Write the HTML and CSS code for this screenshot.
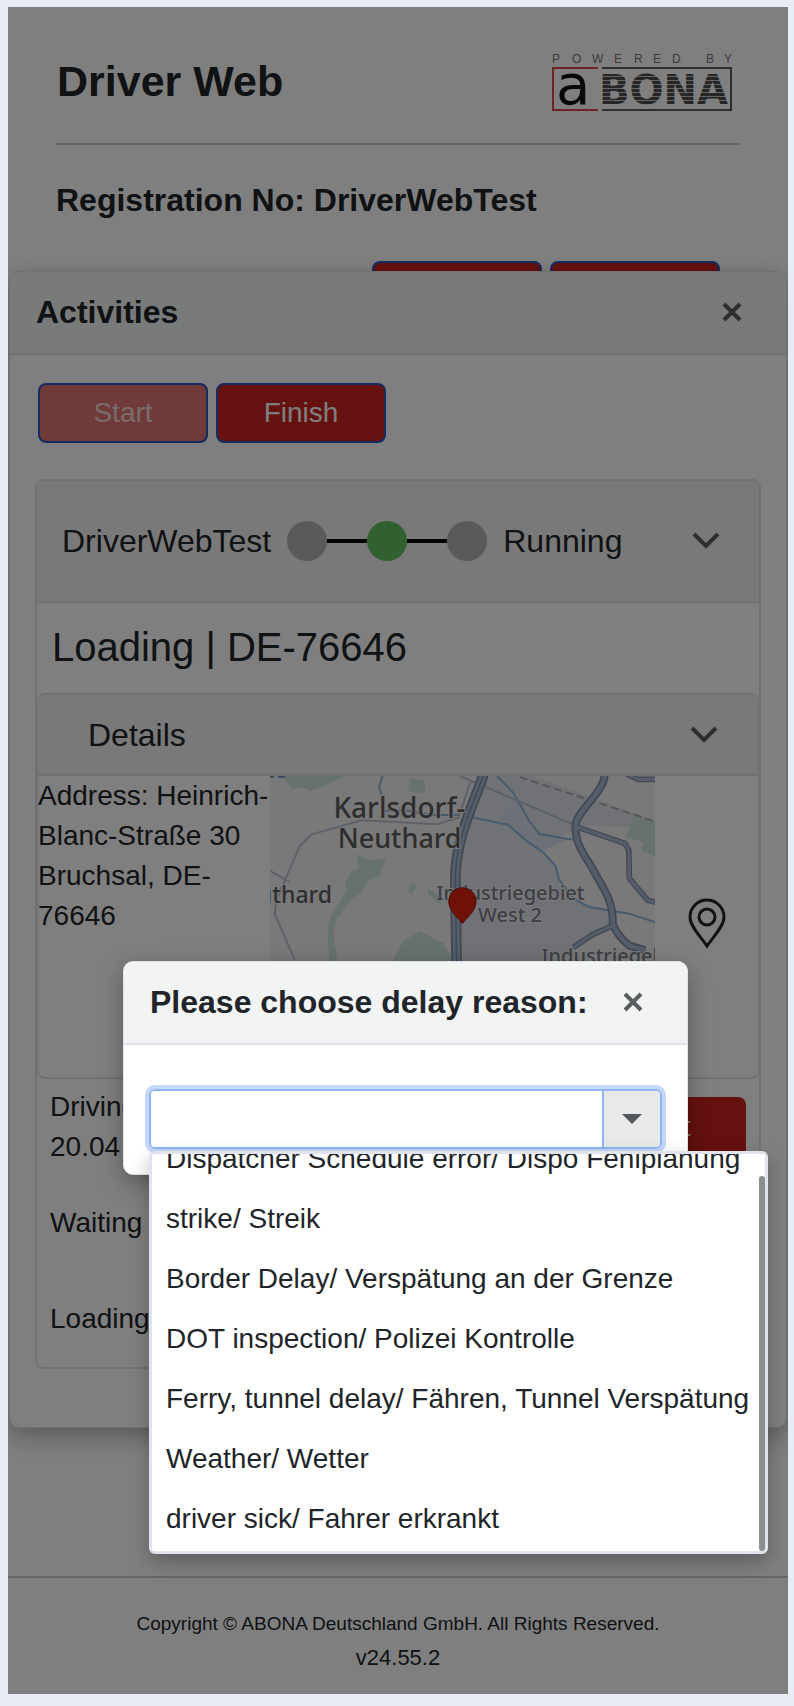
FILE: index.html
```html
<!DOCTYPE html>
<html lang="en">
<head>
<meta charset="utf-8">
<meta name="viewport" content="width=device-width, initial-scale=1">
<title>Driver Web</title>
<link rel="stylesheet" href="styles.css">
</head>
<body>
<div class="page">
  <header class="page-header">
    <h1 class="page-title">Driver Web</h1>
    <svg class="logo" viewBox="0 0 180 58" role="img" aria-label="Powered by ABONA">
      <defs>
        <pattern id="stripes" width="8" height="4" patternUnits="userSpaceOnUse">
          <rect width="8" height="3" fill="#4c4c4c"/>
          <rect y="3" width="8" height="1" fill="#c8c8c8"/>
        </pattern>
      </defs>
      <text class="logo-tag" y="10" x="0 20 40 62 82 101 120 148 154 172">POWERED BY</text>
      <path d="M46 15H1v42h45" fill="none" stroke="#d84848" stroke-width="2"/>
      <path d="M50 15h129v42H50" fill="none" stroke="#5c5c5c" stroke-width="2"/>
      <text class="logo-a" x="4" y="51">a</text>
      <text class="logo-name" x="47" y="51" fill="url(#stripes)">BONA</text>
    </svg>
  </header>
  <main class="page-main">
    <h2 class="registration">Registration No: DriverWebTest</h2>
    <div class="page-actions">
      <button class="btn btn-outlined" type="button" aria-label="Activities"></button>
      <button class="btn btn-outlined" type="button" aria-label="Refresh"></button>
    </div>
  </main>
  <footer class="page-footer">
    <p class="copyright">Copyright © ABONA Deutschland GmbH. All Rights Reserved.</p>
    <p class="version">v24.55.2</p>
  </footer>

  <section class="dialog activities" role="dialog" aria-labelledby="activities-title">
    <div class="dialog-header">
      <h2 class="dialog-title" id="activities-title">Activities</h2>
      <button class="icon-btn" type="button" aria-label="Close">
        <svg class="icon-close" viewBox="0 0 20 20"><path d="M2 2l16 16M18 2L2 18"/></svg>
      </button>
    </div>
    <div class="dialog-body">
      <div class="actions">
        <button class="btn btn-outlined" type="button" disabled>Start</button>
        <button class="btn btn-outlined" type="button">Finish</button>
      </div>
      <div class="card">
        <div class="card-header">
          <span>DriverWebTest</span>
          <span class="steps">
            <span class="dot"></span><span class="bar"></span><span class="dot dot-active"></span><span class="bar"></span><span class="dot"></span>
          </span>
          <span>Running</span>
          <button class="icon-btn push" type="button" aria-label="Toggle activity">
            <svg class="icon-chevron" viewBox="0 0 28 18"><path d="M2 2l12 12L26 2"/></svg>
          </button>
        </div>
        <h3 class="stop-title">Loading | DE-76646</h3>
        <div class="panel">
          <div class="panel-header">
            <span>Details</span>
            <button class="icon-btn push" type="button" aria-label="Toggle details">
              <svg class="icon-chevron" viewBox="0 0 28 18"><path d="M2 2l12 12L26 2"/></svg>
            </button>
          </div>
          <div class="panel-body">
            <p class="address">Address: Heinrich-Blanc-Straße 30 Bruchsal, DE-76646</p>
            <svg class="map" viewBox="30 21 1158 879" preserveAspectRatio="xMidYMin slice" role="img" aria-label="Map">
              <rect x="30" y="21" width="1158" height="879" fill="#f3f3f3"/>
              <g fill="#e2e5eb">
                <path d="M690 21h130l368 134v20L960 170 830 245 600 240 625 150 668 60z"/>
                <path d="M600 240L630 145 740 165 830 240 885 290 900 345 970 405 1050 430 1060 470 940 530 880 620 600 620z"/>
                <path d="M770 80L720 145 760 180 850 245 930 210 830 190z" fill="#dce1ee"/>
              </g>
              <g fill="#d0e5d8">
                <path d="M65 21h190L200 48 155 66 128 55 98 60z"/>
                <path d="M450 27l45 8v40l-50-10z"/>
                <path d="M290 255l40 18 50-6-22 55-30 10-20 35-28 20-50 63c-18 35-2 80 2 125h-24c-2-50-8-90 4-130l48-78-4-22 20-40 22-4z"/>
                <path d="M460 337l10 14-16 27-10-13zM505 357l40 30v22l-42-35z"/>
                <path d="M400 572l30-55 50-30 70 35 32 55v40H400z"/>
                <path d="M1122 142l66 16v106l-45-18 10-26-55-16z"/>
              </g>
              <path d="M30 23h12M55 23h20" stroke="#5f8db8" stroke-width="6"/>
              <g fill="none" stroke="#8fb6dc" stroke-width="6">
                <path d="M368 21l-10 35 8 20M375 125l60-2 80 15h85"/>
                <path d="M635 145l110 22 55 48 50 35 38 42 10 40 45 58 45 24 120 20 80 26"/>
                <path d="M712 21l50 52 45 80 32 42 100 17"/>
              </g>
              <g fill="none" stroke="#bcc2d2" stroke-width="6">
                <path d="M30 305l60 34M105 572L45 435l4-40 72-165 35-34 150-42 100 5 125 7 65-20 35-105"/>
                <path d="M600 21l340 145"/>
              </g>
              <path d="M780 24l408 134" fill="none" stroke="#a4a4a4" stroke-width="5" stroke-dasharray="24 12"/>
              <g fill="none" stroke-linejoin="round">
                <g stroke="#818fa5">
                  <path d="M672 15c-20 60-40 100-60 165-30 90-26 160-24 240l4 250" stroke-width="32"/>
                  <path d="M1035 15c0 55-85 110-88 155 0 70 40 100 60 145 30 50 55 90 52 150 10 25 25 45 50 65l48 14" stroke-width="24"/>
                  <path d="M955 175l140 48 12 20 2 85 55 66 24 6M1060 470l-60 26-60 40M1100 15l35 16h53" stroke-width="17"/>
                </g>
                <g stroke="#a9bad0">
                  <path d="M672 15c-20 60-40 100-60 165-30 90-26 160-24 240l4 250" stroke-width="22"/>
                  <path d="M1035 15c0 55-85 110-88 155 0 70 40 100 60 145 30 50 55 90 52 150 10 25 25 45 50 65l48 14" stroke-width="14"/>
                  <path d="M955 175l140 48 12 20 2 85 55 66 24 6M1060 470l-60 26-60 40M1100 15l35 16h53" stroke-width="10"/>
                </g>
                <path d="M672 15c-20 60-40 100-60 165-30 90-26 160-24 240l4 250" stroke="#8190a6" stroke-width="4"/>
              </g>
              <g class="map-labels">
                <text x="221" y="147" font-size="84">Karlsdorf-</text>
                <text x="234" y="238" font-size="81">Neuthard</text>
                <text x="217" y="403" font-size="69" text-anchor="end">Neuthard</text>
                <g class="map-minor" font-size="60">
                  <text x="530" y="392">Industriegebiet</text>
                  <text x="655" y="460">West 2</text>
                  <text x="845" y="583">Industriegebiet</text>
                </g>
              </g>
              <path d="M608 464c-8-14-41-36-41-67a41 41 0 0 1 82 0c0 31-33 53-41 67z" fill="#e0220f" stroke="#8c1a10" stroke-width="3"/>
            </svg>
            <button class="icon-btn pin-btn" type="button" aria-label="Show location">
              <svg class="icon-pin" viewBox="0 0 40 52"><path d="M20 49C15 41 3 30 3 20a17 17 0 0 1 34 0c0 10-12 21-17 29z"/><circle cx="20" cy="20" r="8"/></svg>
            </button>
          </div>
        </div>
        <div class="row">
          <p>Driving<br>20.04</p>
          <button class="btn push" type="button">Start</button>
        </div>
        <div class="row"><p>Waiting</p></div>
        <div class="row"><p>Loading</p></div>
      </div>
    </div>
  </section>

  <div class="backdrop"></div>

  <section class="dialog delay" role="dialog" aria-modal="true" aria-labelledby="delay-title">
    <div class="dialog-header">
      <h2 class="dialog-title" id="delay-title">Please choose delay reason:</h2>
      <button class="icon-btn" type="button" aria-label="Close">
        <svg class="icon-close" viewBox="0 0 20 20"><path d="M2 2l16 16M18 2L2 18"/></svg>
      </button>
    </div>
    <div class="delay-body">
      <div class="combo">
        <input class="combo-input" type="text" role="combobox" aria-labelledby="delay-title" aria-expanded="true" aria-controls="reasons">
        <button class="combo-toggle" type="button" aria-label="Show reasons">
          <svg class="icon-caret" viewBox="0 0 20 10"><path d="M0 0h20L10 10z"/></svg>
        </button>
        <div class="popup">
          <ul class="options" id="reasons" role="listbox" aria-labelledby="delay-title">
            <li role="option">Dispatcher Schedule error/ Dispo Fehlplanung</li>
            <li role="option">strike/ Streik</li>
            <li role="option">Border Delay/ Verspätung an der Grenze</li>
            <li role="option">DOT inspection/ Polizei Kontrolle</li>
            <li role="option">Ferry, tunnel delay/ Fähren, Tunnel Verspätung</li>
            <li role="option">Weather/ Wetter</li>
            <li role="option">driver sick/ Fahrer erkrankt</li>
          </ul>
          <span class="scroll-thumb"></span>
        </div>
      </div>
    </div>
  </section>
</div>
</body>
</html>
```

FILE: styles.css
```css
* { box-sizing: border-box; }

body {
  margin: 0;
  padding: 7px 6px 12px 8px;
  background: #e8ecf4;
  color: #212529;
  font-family: "Liberation Sans", Arial, sans-serif;
  font-size: 28px;
  line-height: 40px;
}

h1, h2, h3, p, ul { margin: 0; padding: 0; }
button, input { font: inherit; color: inherit; }

.page {
  position: relative;
  display: flex;
  flex-direction: column;
  min-height: calc(100vh - 19px);
  background: #fff;
  overflow: hidden;
}

.page-header {
  display: flex;
  justify-content: space-between;
  align-items: flex-start;
  margin: 0 48px;
  padding: 46px 8px 32px 1px;
  border-bottom: 2px solid #ccc;
}
.page-title { font-size: 43px; line-height: 56px; }
.logo { width: 180px; height: 58px; }
.logo-tag { font-size: 12px; fill: #777; }
.logo-a { font: 56px "DejaVu Sans", sans-serif; fill: #111; }
.logo-name { font: bold 40px "DejaVu Sans", sans-serif; }

.page-main { flex: 1; padding: 35px 68px 0 48px; }
.registration { font-size: 32px; line-height: 40px; }
.page-actions {
  display: flex;
  justify-content: flex-end;
  gap: 8px;
  margin-top: 41px;
}

.page-footer {
  padding: 26px 0 14px;
  border-top: 2px solid #ccc;
  text-align: center;
}
.copyright { font-size: 19px; }
.version { font-size: 22px; line-height: 28px; padding-bottom: 8px; }

.btn {
  width: 170px;
  height: 60px;
  border: 0;
  border-radius: 8px;
  background: #ca221e;
  color: #fff;
}
.btn-outlined { border: 2px solid #2858c4; }
.btn:disabled { background: #e07472; color: #f4d8d8; }

.icon-btn {
  display: flex;
  align-items: center;
  justify-content: center;
  padding: 0;
  border: 0;
  background: none;
}
.icon-btn svg { fill: none; stroke: #5a5d60; stroke-width: 4; }
.push { margin-left: auto; }
.icon-close { width: 20px; height: 20px; }
.icon-chevron { width: 28px; height: 18px; }
.icon-btn .icon-pin { width: 40px; height: 52px; stroke: #212529; stroke-width: 3; }

.dialog {
  position: absolute;
  border: 1px solid #dfe2ea;
  border-radius: 10px;
  background: #fff;
  box-shadow: 0 8px 24px rgba(0, 0, 0, .3);
}
.dialog-header {
  display: flex;
  align-items: center;
  justify-content: space-between;
  height: 83px;
  padding: 0 44px 2px 26px;
  border-bottom: 2px solid #dfe2ea;
  border-radius: 10px 10px 0 0;
  background: #f2f4f4;
}
.dialog-title { font-size: 32px; line-height: 40px; }

.activities { top: 264px; left: 1px; right: 1px; }
.dialog-body { padding: 28px 25px 58px; }
.actions { display: flex; gap: 8px; padding: 0 3px; margin-bottom: 36px; }

.card { border: 2px solid #dfe2ea; border-radius: 8px; }
.card-header {
  display: flex;
  align-items: center;
  gap: 16px;
  height: 122px;
  padding: 0 39px 0 25px;
  border-bottom: 2px solid #dfe2ea;
  background: #f2f3f3;
  font-size: 32px;
}
.steps { display: flex; align-items: center; }
.dot { width: 40px; height: 40px; border-radius: 50%; background: #b4b4b4; }
.dot-active { background: #63c263; }
.bar { width: 40px; height: 4px; background: #000; }

.stop-title {
  padding: 20px 15px 22px;
  font-size: 40px;
  line-height: 48px;
  font-weight: 400;
}
.panel { border: 2px solid #dfe2ea; border-radius: 8px; border-left-width: 1px; border-right-width: 1px; }
.panel-header {
  display: flex;
  align-items: center;
  height: 81px;
  padding: 0 40px 0 50px;
  border-bottom: 2px solid #dfe2ea;
  border-radius: 8px 8px 0 0;
  background: #f2f3f3;
  font-size: 32px;
}
.panel-body {
  display: grid;
  grid-template-columns: minmax(0, 232fr) minmax(0, 386fr) minmax(0, 103fr);
  padding-bottom: 8px;
}
.map { width: 100%; height: 293px; }
.map-labels {
  font-family: "Noto Sans", sans-serif;
  font-weight: 500;
  fill: #5c5c5c;
  stroke: #f4f4f4;
  stroke-width: 6px;
  paint-order: stroke;
}
.map-minor { fill: #7a7e88; }

.row {
  display: flex;
  align-items: center;
  min-height: 96px;
  padding: 0 13px;
}

.backdrop { position: absolute; inset: 0; background: rgba(0, 0, 0, .5); }

.delay { top: 954px; left: 115px; right: 100px; }
.delay-body { padding: 44px 25px 25px; }
.combo {
  position: relative;
  display: flex;
  height: 60px;
  border: 2px solid #8fb4f8;
  border-radius: 6px;
  box-shadow: 0 0 0 4px #c5d7fb;
}
.combo-input {
  flex: 1;
  min-width: 0;
  padding: 0 14px;
  border: 0;
  border-radius: 4px 0 0 4px;
  background: #fff;
  outline: 0;
}
.combo-toggle {
  display: flex;
  align-items: center;
  justify-content: center;
  width: 58px;
  padding: 0;
  border: 0;
  border-left: 2px solid #8fb4f8;
  border-radius: 0 4px 4px 0;
  background: #e8eaea;
}
.icon-caret { width: 20px; height: 10px; fill: #56595c; }

.popup {
  position: absolute;
  top: 60px;
  left: -2px;
  width: max-content;
  padding-bottom: 2px;
  border: 3px solid #e1e4ec;
  border-radius: 6px;
  background: #fff;
  box-shadow: 0 8px 20px rgba(0, 0, 0, .25);
}
.options {
  display: flex;
  flex-direction: column;
  justify-content: flex-end;
  height: 395px;
  overflow: hidden;
  list-style: none;
}
.options li { flex: none; padding: 10px 16px 10px 14px; }
.scroll-thumb {
  position: absolute;
  top: 22px;
  right: 0;
  bottom: 0;
  width: 6px;
  border-radius: 3px;
  background: #8c8d8f;
}
```
